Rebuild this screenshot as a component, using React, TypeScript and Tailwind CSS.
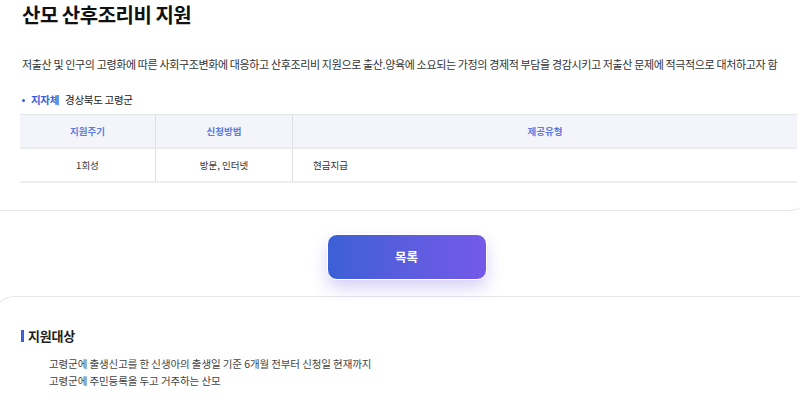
import React from "react";

const rows = [
  { cycle: "1회성", method: "방문, 인터넷", type: "현금지급" },
];

const targets = [
  "고령군에 출생신고를 한 신생아의 출생일 기준 6개월 전부터 신청일 현재까지",
  "고령군에 주민등록을 두고 거주하는 산모",
];

export default function App() {
  return (
    <div className="w-[800px] h-[418px] overflow-hidden bg-white font-['Noto_Sans_CJK_KR',sans-serif] text-[#333]">
      {/* 상단 카드 */}
      <section className="w-[810px] rounded-br-[20px] border-r border-b border-[#e6e6e9] pl-5 pt-[1px] pb-[27px]">
        <h1 className="pl-[2px] text-[20px] leading-[28px] font-bold text-[#111] tracking-[-0.5px]">
          산모 산후조리비 지원
        </h1>
        <p className="mt-[27px] pl-[2px] text-[11px] leading-[16px] tracking-[-0.36px] text-[#333]">
          저출산 및 인구의 고령화에 따른 사회구조변화에 대응하고 산후조리비 지원으로 출산.양육에 소요되는 가정의 경제적 부담을 경감시키고 저출산 문제에 적극적으로 대처하고자 함
        </p>
        <div className="mt-[20px] flex items-center pl-[2px] text-[10.5px] leading-[16px] tracking-[-0.3px]">
          <span className="mr-[6px] h-[3px] w-[3px] rounded-full bg-[#3d5fd9]" />
          <span className="font-bold text-[#3d5fd9] mr-[6px]">지자체</span>
          <span className="text-[#222]">경상북도 고령군</span>
        </div>

        <div className="mt-[6px] w-[777px] text-[9.5px]">
          <div className="grid grid-cols-[136px_137px_1fr] h-[35px] bg-[#f4f5fa] border-t border-[#e3e5ec] border-b-2 border-b-[#ebecf0] font-bold text-[#5b7be0]">
            <div className="flex items-center justify-center border-r border-[#dedfe4]">지원주기</div>
            <div className="flex items-center justify-center border-r border-[#dedfe4]">신청방법</div>
            <div className="flex items-center justify-center">제공유형</div>
          </div>
          {rows.map((r) => (
            <div
              key={r.cycle}
              className="grid grid-cols-[136px_137px_1fr] h-[34px] border-b-2 border-[#ededed] text-[#333]"
            >
              <div className="flex items-center justify-center border-r border-[#dedede]">{r.cycle}</div>
              <div className="flex items-center justify-center border-r border-[#dedede]">{r.method}</div>
              <div className="flex items-center pl-5">{r.type}</div>
            </div>
          ))}
        </div>
      </section>

      {/* 목록 버튼 */}
      <div className="flex justify-center pl-[13px] pt-[23px] pb-[16px]">
        <button className="w-[160px] h-[46px] rounded-[10px] border border-white bg-gradient-to-r from-[#3b60d6] to-[#7459e8] text-white text-[12.5px] font-bold shadow-[0_8px_16px_rgba(110,95,220,0.28)]">
          목록
        </button>
      </div>

      {/* 지원대상 */}
      <section className="-ml-[6px] w-[830px] h-[200px] rounded-tl-[20px] border-t border-l border-[#e6e6e9] pl-[26px] pt-[30px]">
        <h2 className="flex items-center text-[13px] leading-[18px] font-bold text-[#222] tracking-[-0.2px]">
          <span className="mr-[4px] h-[12px] w-[3px] bg-[#3d5fd9]" />
          지원대상
        </h2>
        <ul className="mt-[10px] pl-[28px] text-[10.5px] leading-[17px] tracking-[-0.1px] text-[#444]">
          {targets.map((t) => (
            <li key={t}>{t}</li>
          ))}
        </ul>
      </section>
    </div>
  );
}
